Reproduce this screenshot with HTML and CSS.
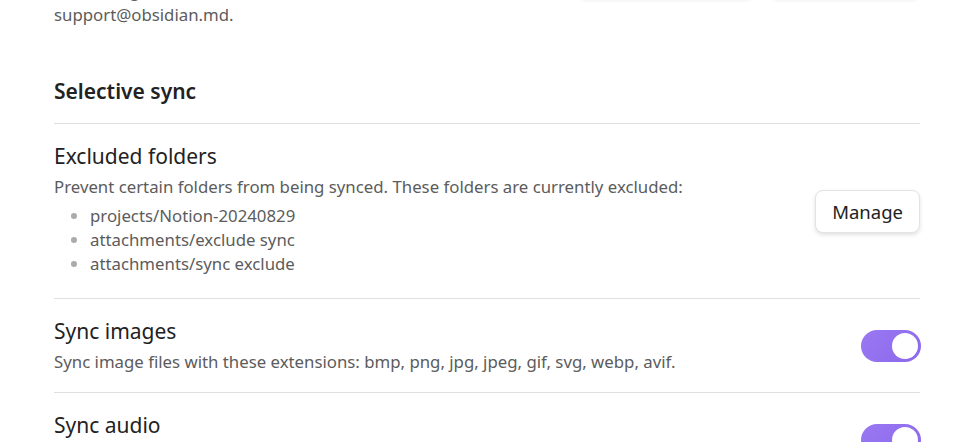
FILE: index.html
```html
<!DOCTYPE html>
<html lang="en">
<head>
  <meta charset="UTF-8" />
  <title>Sync settings</title>
  <link rel="stylesheet" href="styles.css">
</head>
<body>
  <div class="settings">
    <!-- Previous section (scrolled mostly out of view) -->
    <div class="intro">
      <div class="intro-text">
        <p>Still having trouble? Contact us at</p>
        <p>support@obsidian.md.</p>
      </div>
      <div class="intro-actions">
        <button class="ghost-btn wide">Contact support</button>
        <button class="ghost-btn">Learn more</button>
      </div>
    </div>

    <h3 class="section-heading">Selective sync</h3>

    <div class="setting-item">
      <div class="setting-info">
        <div class="setting-name">Excluded folders</div>
        <div class="setting-desc">
          Prevent certain folders from being synced. These folders are currently excluded:
          <ul class="folder-list">
            <li>projects/Notion-20240829</li>
            <li>attachments/exclude sync</li>
            <li>attachments/sync exclude</li>
          </ul>
        </div>
      </div>
      <div class="setting-control">
        <button class="btn">Manage</button>
      </div>
    </div>

    <div class="setting-item">
      <div class="setting-info">
        <div class="setting-name">Sync images</div>
        <div class="setting-desc">Sync image files with these extensions: bmp, png, jpg, jpeg, gif, svg, webp, avif.</div>
      </div>
      <div class="setting-control">
        <div class="toggle is-on"><span class="knob"></span></div>
      </div>
    </div>

    <div class="setting-item">
      <div class="setting-info">
        <div class="setting-name">Sync audio</div>
        <div class="setting-desc">Sync audio files with these extensions: mp3, wav, m4a, 3gp, flac, ogg, oga, opus.</div>
      </div>
      <div class="setting-control">
        <div class="toggle is-on"><span class="knob"></span></div>
      </div>
    </div>
  </div>
</body>
</html>
```

FILE: styles.css
```css
/* ---------- Page ---------- */
html, body {
  margin: 0;
  padding: 0;
  background: #fff;
  overflow: hidden;
}
body {
  font-family: "Noto Sans", "Open Sans", sans-serif;
  color: #222;
}
.settings {
  margin: -21px 41px 0 54px;
}

/* ---------- Intro (partially scrolled) ---------- */
.intro {
  display: flex;
  justify-content: space-between;
  align-items: flex-start;
}
.intro-text p {
  margin: 0;
  font-size: 16.8px;
  line-height: 24px;
  color: #5c5c5c;
}
.intro-actions {
  display: flex;
  gap: 16px;
  margin-top: -19px;
}
.ghost-btn {
  width: 150px;
  height: 40px;
  border: none;
  border-radius: 8px;
  background: #fff;
  box-shadow: 0 1px 3px rgba(0, 0, 0, 0.06);
  font: inherit;
  color: transparent;
}
.ghost-btn.wide {
  width: 176px;
}

/* ---------- Section heading ---------- */
.section-heading {
  margin: 50px 0 0;
  padding-bottom: 18px;
  font-size: 21px;
  line-height: 28px;
  font-weight: 600;
}

/* ---------- Setting rows ---------- */
.setting-item {
  display: flex;
  align-items: center;
  gap: 24px;
  border-top: 1px solid #e0e0e0;
  padding: 18px 0 18px;
}
.setting-info {
  flex: 1;
}
.setting-name {
  font-size: 21px;
  line-height: 28px;
}
.setting-desc {
  margin-top: 5px;
  font-size: 16.8px;
  line-height: 24px;
  color: #5c5c5c;
}
.folder-list {
  margin: 5px 0 4px;
  padding-left: 36px;
}
.folder-list li::marker {
  color: #ababab;
}

/* ---------- Controls ---------- */
.btn {
  font: inherit;
  font-size: 18.5px;
  color: #222;
  background: #fff;
  border: 1px solid #e3e3e3;
  border-radius: 8px;
  padding: 0 16px;
  height: 43px;
  box-shadow: 0 2px 4px rgba(0, 0, 0, 0.12);
}
.toggle {
  width: 60px;
  height: 32px;
  margin-right: -1px;
  border-radius: 16px;
  background: linear-gradient(135deg, #9a78f2, #8c68ec);
  display: flex;
  align-items: center;
  justify-content: flex-end;
  padding: 0 3px;
  box-sizing: border-box;
}
.toggle .knob {
  width: 26px;
  height: 26px;
  border-radius: 50%;
  background: #fff;
}
```
